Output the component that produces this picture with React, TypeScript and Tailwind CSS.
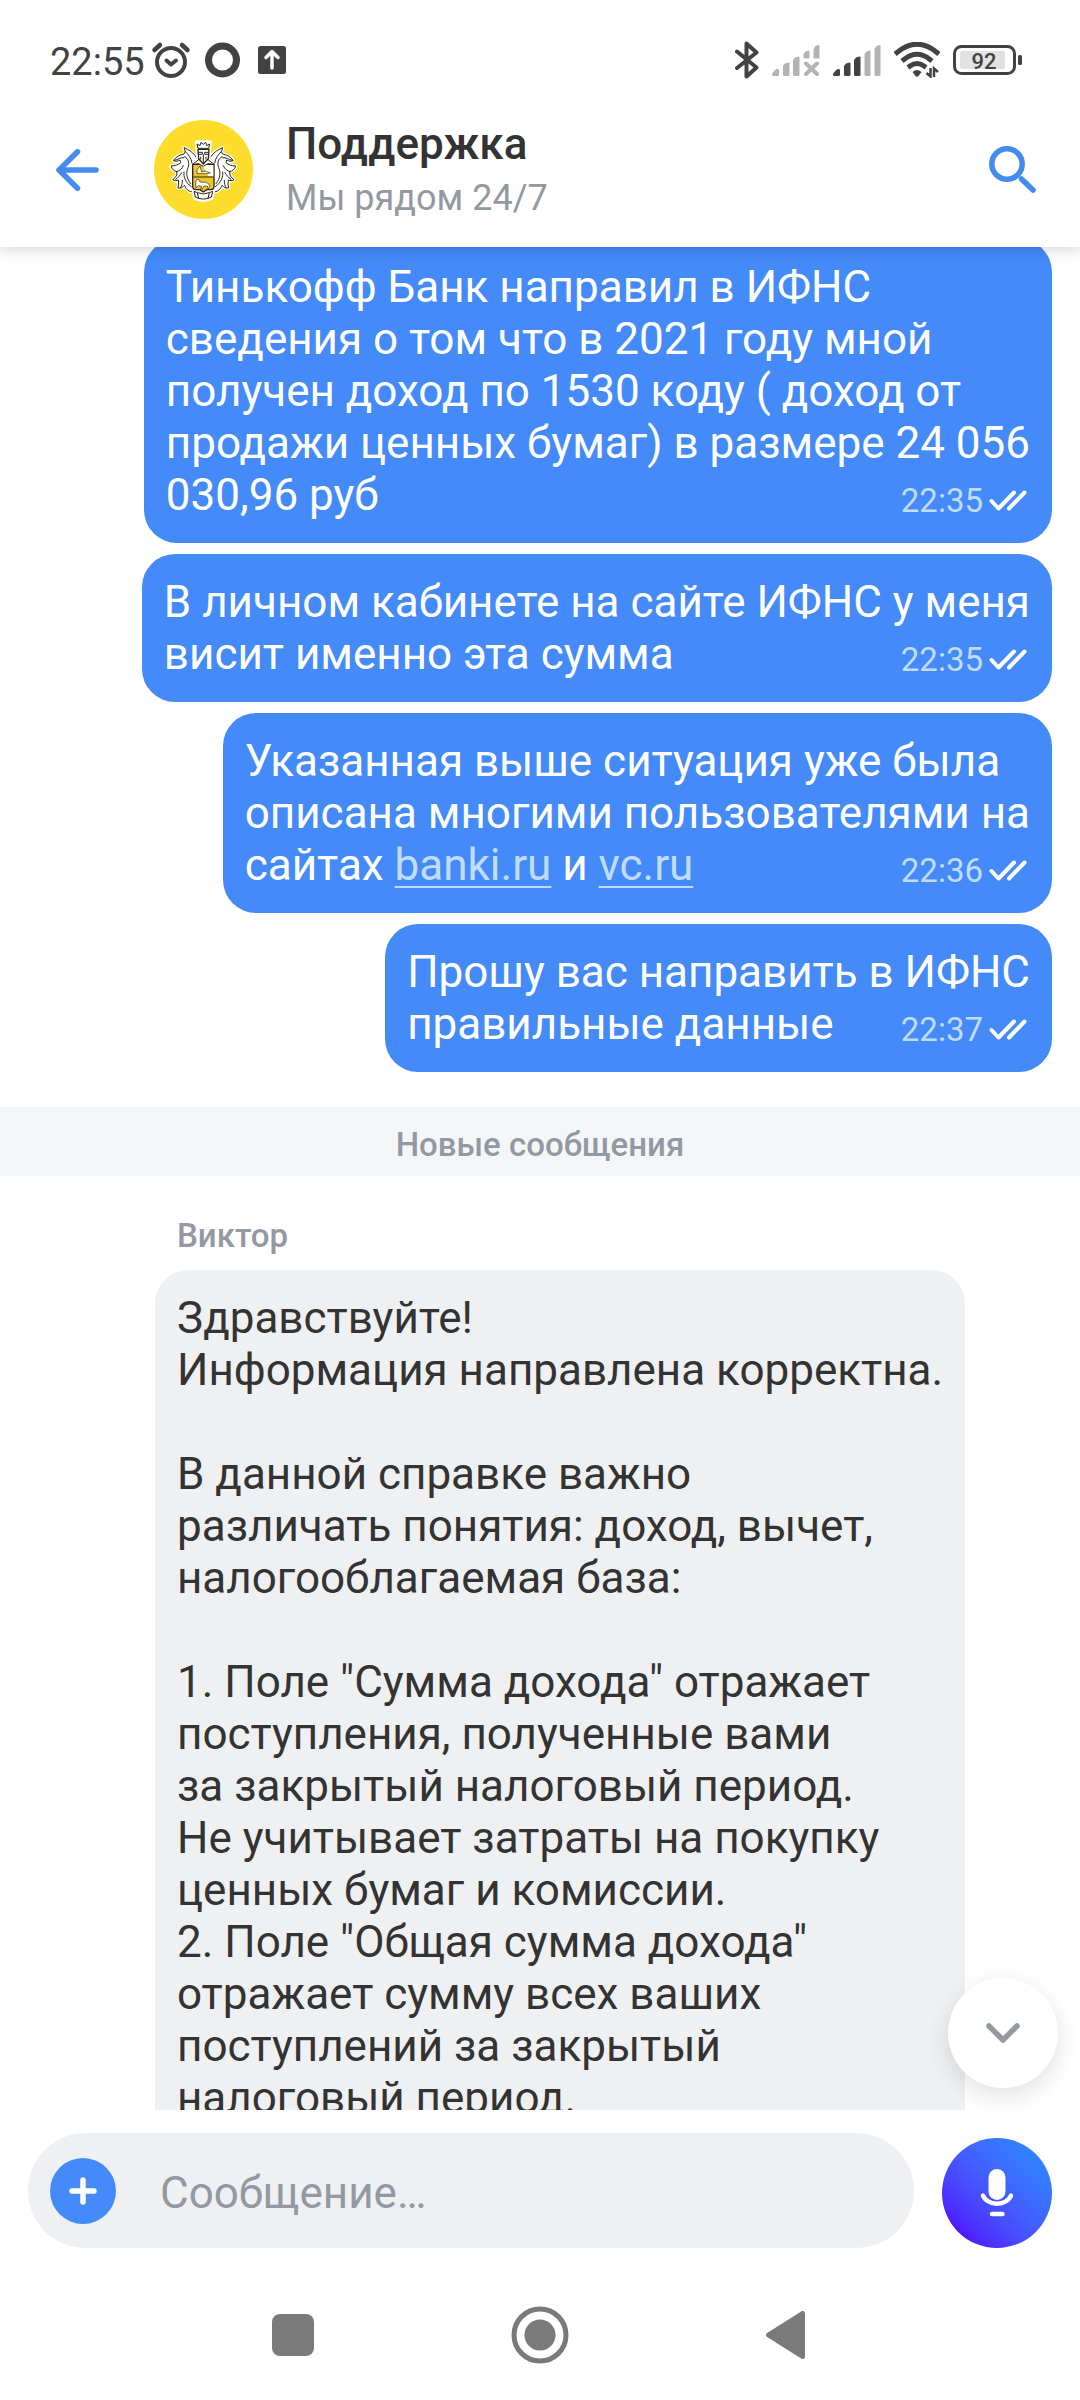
import type { ReactNode } from "react";

type Outgoing = {
    id: number;
    time: string;
    body: ReactNode;
};

const linkClass = "text-[#c0dcff] underline decoration-2 underline-offset-6";

const outgoing: Outgoing[] = [
    {
        id: 1,
        time: "22:35",
        body: "Тинькофф Банк направил в ИФНС\nсведения о том что в 2021 году мной\nполучен доход по 1530 коду ( доход от\nпродажи ценных бумаг) в размере 24 056\n030,96 руб",
    },
    {
        id: 2,
        time: "22:35",
        body: "В личном кабинете на сайте ИФНС у меня\nвисит именно эта сумма",
    },
    {
        id: 3,
        time: "22:36",
        body: (
            <>
                {"Указанная выше ситуация уже была\nописана многими пользователями на\nсайтах "}
                <a href="https://banki.ru" className={linkClass}>banki.ru</a>
                {" и "}
                <a href="https://vc.ru" className={linkClass}>vc.ru</a>
            </>
        ),
    },
    {
        id: 4,
        time: "22:37",
        body: "Прошу вас направить в ИФНС\nправильные данные",
    },
];

const reply = `Здравствуйте!
Информация направлена корректна.

В данной справке важно
различать понятия: доход, вычет,
налогооблагаемая база:

1. Поле "Сумма дохода" отражает
поступления, полученные вами
за закрытый налоговый период.
Не учитывает затраты на покупку
ценных бумаг и комиссии.
2. Поле "Общая сумма дохода"
отражает сумму всех ваших
поступлений за закрытый
налоговый период.`;

function AlarmIcon() {
    return (
        <svg width="40" height="38" viewBox="0 0 40 38" fill="none" stroke="#424242" strokeLinecap="round" strokeLinejoin="round">
            <circle cx="20" cy="21" r="14" strokeWidth="4" />
            <path d="M3.5 9 9 4M36.500 9 31 4" strokeWidth="4.500" />
            <path d="M15.500 19.500 20 23.500l5-4" strokeWidth="4" />
        </svg>
    );
}

function SignalBars({ active, muted }: { active: number; muted?: boolean }) {
    const bars = [
        "M0 29.500v-1l4-4.200q2.800-.8 3 .700v4.500q0 1.500-1.500 1.500h-4q-1.500 0-1.500-1.500z",
        "M11 29.500V21l2-2.500 3.500-1q1 0 1 1v11q0 1.500-1.500 1.500h-3.500q-1.500 0-1.500-1.500z",
        "M21 29.500V15l2-2.500 3.500-1q1 0 1 1v17q0 1.500-1.500 1.500h-3.500q-1.500 0-1.500-1.500z",
        muted
            ? "M31.500 12.500V9l2-2.500 3-1q1 0 1 1v6q0 1-1 1h-4q-1 0-1-1z"
            : "M31.500 29.500V9l2-2.500 3-1q1 0 1 1v23q0 1.500-1.500 1.500H33q-1.500 0-1.500-1.500z",
        muted
            ? "M41.500 12.500V4l2-3 3-1q1 0 1 1v11.500q0 1-1 1h-4q-1 0-1-1z"
            : "M41.500 29.500V4l2-3 3-1q1 0 1 1v28.500q0 1.500-1.500 1.500H43q-1.500 0-1.500-1.500z",
    ];
    return (
        <svg width="48" height="31" viewBox="0 0 48 31">
            {bars.map((d, i) => (
                <path key={i} d={d} fill={i < active ? "#424242" : "#b3b3b3"} />
            ))}
            {muted && <path d="m34 18.500 11 10.500M45 18.500 34 29" stroke="#b3b3b3" strokeWidth="4" strokeLinecap="round" />}
        </svg>
    );
}

function StatusBar() {
    return (
        <div className="flex h-[99px] items-center justify-between pt-[21px] pr-[57px] pl-[50px] text-[#424242]">
            <div className="flex items-center">
                <span className="mr-[6px] pt-1 text-[38px] leading-10">22:55</span>
                <AlarmIcon />
                <svg className="ml-[14px]" width="35" height="36" viewBox="0 0 35 36">
                    <circle cx="17.500" cy="18" r="14" fill="none" stroke="#424242" strokeWidth="7" />
                </svg>
                <svg className="ml-[18px]" width="28" height="28" viewBox="0 0 28 28" fill="none">
                    <rect width="28" height="28" rx="2.500" fill="#424242" />
                    <path d="M14 22V6.500M8 11.500l6-6 6 6" stroke="#fff" strokeWidth="3.500" strokeLinecap="round" strokeLinejoin="round" />
                </svg>
            </div>
            <div className="flex items-center gap-[13px]">
                <svg width="24" height="40" viewBox="0 0 24 40" fill="none">
                    <path d="M2 11.500 21.500 27.500 11.500 36.500V3.500l10 9L2 28" stroke="#424242" strokeWidth="4" strokeLinejoin="round" strokeLinecap="round" />
                </svg>
                <SignalBars active={0} muted />
                <SignalBars active={3} />
                <svg width="46" height="36" viewBox="0 0 46 36" fill="none">
                    <path d="M3 10.500Q23-6 43 10.500" stroke="#424242" strokeWidth="5" strokeLinecap="square" strokeLinejoin="round" />
                    <path d="M10 17.500q13-10.500 26 0M16 24q7-5 14 0" stroke="#424242" strokeWidth="5" strokeLinecap="square" />
                    <path d="m18.500 30q4.500-4 9 0l-3 4q-1.500 1.500-3 0z" fill="#424242" />
                    <path d="M36.500 26v8.500L32.500 31M40 35v-8.500l4 3.500" stroke="#424242" strokeWidth="2.500" />
                </svg>
                <svg width="70" height="30" viewBox="0 0 70 30" fill="none" fontFamily="Roboto">
                    <rect x="1.500" y="1.500" width="60" height="27" rx="7" stroke="#424242" strokeWidth="3" />
                    <rect x="7" y="6" width="45" height="18" rx="2" fill="#e2e2e2" />
                    <rect x="65" y="10" width="4" height="10" rx="1.500" fill="#424242" />
                    <text x="31" y="23.500" fontSize="22" fontWeight="500" textAnchor="middle" fill="#424242">92</text>
                </svg>
            </div>
        </div>
    );
}

const wing =
    "M178 168C174 146 160 126 132 115l4 12-4 7c-12 2-24 8-32 20 8 3 14 1 20-2l2 8c-8 6-16 10-29 10 3 10 9 15 18 17l-1 10c-3 7-8 11-12 14 6 4 12 3 17 1l1 12-2 12c8 2 14-2 19-8l6 10c4 5 10 9 20 10l4-10z";

function CrestWing() {
    return (
        <>
            <path d={wing} fill="#fff" stroke="#fff" strokeWidth="10" strokeLinejoin="round" />
            <path d={wing} fill="#fff" stroke="#2b2718" strokeWidth="3" strokeLinejoin="round" />
            <path
                d="M136 127c8 8 18 18 20 34M104 153c10-2 18-10 28-8M134 142c12 6 15 20 10 33-6 14-6 30 8 48M110 187c8-2 16-8 20-18M107 210c8-4 12-12 18-20M121 235c5-6 6-12 6-22M132 188c-2 14 4 32 22 44"
                fill="none"
                stroke="#2b2718"
                strokeWidth="3"
                strokeLinecap="round"
            />
        </>
    );
}

function Avatar() {
    return (
        <svg width="99" height="99" viewBox="42 32 297 297" role="img" aria-label="Поддержка">
            <circle cx="190.500" cy="180.500" r="148.500" fill="#ffdd2d" />
            <CrestWing />
            <g transform="translate(380 0) scale(-1 1)">
                <CrestWing />
            </g>
            <path d="m168 96h44l-4 60h-36zM158 244h64l-4 24-28 8-28-8z" fill="#fff" stroke="#fff" strokeWidth="6" strokeLinejoin="round" />
            <path d="M158 165h64v66q0 10-10 10h-12l-10 7-10-7h-12q-10 0-10-10z" fill="#f0c52b" stroke="#2b2718" strokeWidth="4" />
            <path d="M186 167h34v34h-14z" fill="#fff" />
            <path d="M160 203h60" stroke="#2b2718" strokeWidth="3" />
            <path d="M171 181v12h26l14-2-16-6-10 3-5-18z" fill="#fff6d0" stroke="#2b2718" strokeWidth="2" />
            <path d="m168 213 7-4 5 9 16 1q12 1 13 12l-5 8-2-9-11 1-4 8h-5l3-8-10-2-7 7-1-9z" fill="#fff" stroke="#2b2718" strokeWidth="2" />
            <path d="m158 165 18-14h28l18 14-18-2-14 8-14-8z" fill="#fff" stroke="#2b2718" strokeWidth="3" />
            <path d="M174 120h33l-2 28-15 16-14-16z" fill="#fff" stroke="#2b2718" strokeWidth="4" />
            <path d="M177 129h10v6h-10M204 129h-10v6h10M190 135v26M182 142v8M198 142v8" fill="none" stroke="#2b2718" strokeWidth="3" />
            <path d="m174 117-3-13 9 5 3-10 7 6 7-6 3 10 9-5-3 13z" fill="#fff" stroke="#2b2718" strokeWidth="3" strokeLinejoin="round" />
            <path d="M162 246l10 4q18 8 36 0l10-4-4 17-10 4q-14 5-28 0l-10-4z" fill="#fff" stroke="#2b2718" strokeWidth="3" strokeLinejoin="round" />
            <path d="M172 250l4 17M208 250l-4 17" stroke="#2b2718" strokeWidth="3" />
        </svg>
    );
}

function Checks() {
    return (
        <svg width="41" height="22" viewBox="0 0 41 22" fill="none" stroke="#fff" strokeWidth="4" strokeLinecap="round" strokeLinejoin="round">
            <path d="m2.500 11 7 7.500L25 2.500M20 18.500 35.500 2.500" />
        </svg>
    );
}

function Bubble({ time, body }: Omit<Outgoing, "id">) {
    return (
        <li className="w-fit rounded-[33px] bg-[#448bf9] p-[22px] whitespace-pre-line text-white">
            {body}
            <span className="float-right flex h-[52px] items-center gap-[6px] pt-3">
                <time className="text-[33px] leading-10 text-[#c0dcff]">{time}</time>
                <Checks />
            </span>
        </li>
    );
}

function Header() {
    return (
        <header className="relative z-10 bg-white shadow-[0_2px_14px_rgba(0,0,0,0.18)]">
            <StatusBar />
            <div className="flex h-[148px] items-center pr-11 pb-[7px] pl-14">
                <button type="button" aria-label="Назад" className="mr-[55px]">
                    <svg width="43" height="42" viewBox="0 0 43 42" fill="none" stroke="#448bf0" strokeWidth="5.500" strokeLinecap="round" strokeLinejoin="round">
                        <path d="M21.500 2.800 3 21l18.500 18.200M3 21h37" />
                    </svg>
                </button>
                <Avatar />
                <div className="ml-[33px] flex-1">
                    <h1 className="text-[44px] leading-[52px] font-medium text-[#333333]">Поддержка</h1>
                    <p className="mt-1 text-[36px] leading-[48px] text-[#9299a2]">Мы рядом 24/7</p>
                </div>
                <button type="button" aria-label="Поиск">
                    <svg width="47" height="47" viewBox="0 0 47 47" fill="none" stroke="#448bf0" strokeWidth="5.500" strokeLinecap="round">
                        <circle cx="18" cy="18" r="15.200" />
                        <path d="m32.500 33 11.500 11" />
                    </svg>
                </button>
            </div>
        </header>
    );
}

function Composer() {
    return (
        <form className="flex items-end gap-7 bg-white px-7 pt-[23px]">
            <div className="flex h-[115px] flex-1 items-center rounded-full bg-[#eff0f2] pl-[22px]">
                <button type="button" aria-label="Прикрепить" className="flex size-[66px] items-center justify-center rounded-full bg-[#448bf9]">
                    <svg width="28" height="28" viewBox="0 0 28 28" stroke="#fff" strokeWidth="5.500" strokeLinecap="round">
                        <path d="M14 3v22M3 14h22" />
                    </svg>
                </button>
                <input
                    type="text"
                    aria-label="Сообщение"
                    placeholder="Сообщение…"
                    className="ml-11 min-w-0 flex-1 pt-1 text-[44px] leading-[52px] outline-none placeholder:text-[#9299a2]"
                />
            </div>
            <button
                type="button"
                aria-label="Записать голосовое сообщение"
                className="flex size-[110px] items-center justify-center rounded-full bg-linear-to-tr from-[#4f16ff] from-15% to-[#2f83ff] to-85%"
            >
                <svg width="34" height="48" viewBox="0 0 34 48" fill="none" stroke="#fff" strokeLinecap="round">
                    <rect x="8.500" y="0" width="17" height="31" rx="8.500" fill="#fff" stroke="none" />
                    <path d="M3 26.500a14.500 11 0 0 0 28 0M12 45h10.500" strokeWidth="4.500" />
                </svg>
            </button>
        </form>
    );
}

function NavBar() {
    return (
        <nav className="flex h-[152px] items-center justify-center bg-white pt-[22px]">
            <button type="button" aria-label="Недавние" className="flex w-[247px] justify-center">
                <span className="size-[42px] rounded-lg bg-[#7a7a7a]" />
            </button>
            <button type="button" aria-label="Домой" className="flex w-[247px] justify-center">
                <svg width="58" height="58" viewBox="0 0 58 58" fill="none">
                    <circle cx="29" cy="29" r="26" stroke="#7a7a7a" strokeWidth="5" />
                    <circle cx="29" cy="29" r="15.500" fill="#7a7a7a" />
                </svg>
            </button>
            <button type="button" aria-label="Назад" className="flex w-[247px] justify-center pr-1">
                <svg width="39" height="48" viewBox="0 0 39 48">
                    <path d="M2.500 24 36.500 2.500v43z" fill="#7a7a7a" stroke="#7a7a7a" strokeWidth="5" strokeLinejoin="round" />
                </svg>
            </button>
        </nav>
    );
}

export default function App() {
    return (
        <div className="flex h-screen flex-col bg-white font-[Roboto,sans-serif] text-[#333333]">
            <Header />
            <main className="relative min-h-0 flex-1 overflow-hidden text-[44px] leading-[52px]">
                <ul className="-mt-2 flex flex-col items-end gap-[11px] px-7">
                    {outgoing.map((m) => (
                        <Bubble key={m.id} time={m.time} body={m.body} />
                    ))}
                </ul>
                <div className="mt-[35px] bg-[#f5f6f8] pt-[18px] pb-3 text-center text-[33px] leading-[39px] font-medium text-[#9299a2]">
                    Новые сообщения
                </div>
                <section className="mt-10 pl-[155px]">
                    <h2 className="pl-[22px] text-[33px] leading-[39px] font-medium text-[#9299a2]">Виктор</h2>
                    <p className="mt-[15px] w-fit rounded-[33px] bg-[#eff0f2] p-[22px] whitespace-pre-line">{reply}</p>
                </section>
                <button
                    type="button"
                    aria-label="Вниз"
                    className="absolute right-[22px] bottom-[22px] flex size-[110px] items-center justify-center rounded-full bg-white shadow-[0_8px_24px_rgba(0,0,0,0.12)]"
                >
                    <svg width="34" height="20" viewBox="0 0 34 20" fill="none" stroke="#9299a2" strokeWidth="5.500" strokeLinecap="round" strokeLinejoin="round">
                        <path d="m3 3 14 14L31 3" />
                    </svg>
                </button>
            </main>
            <Composer />
            <NavBar />
        </div>
    );
}
